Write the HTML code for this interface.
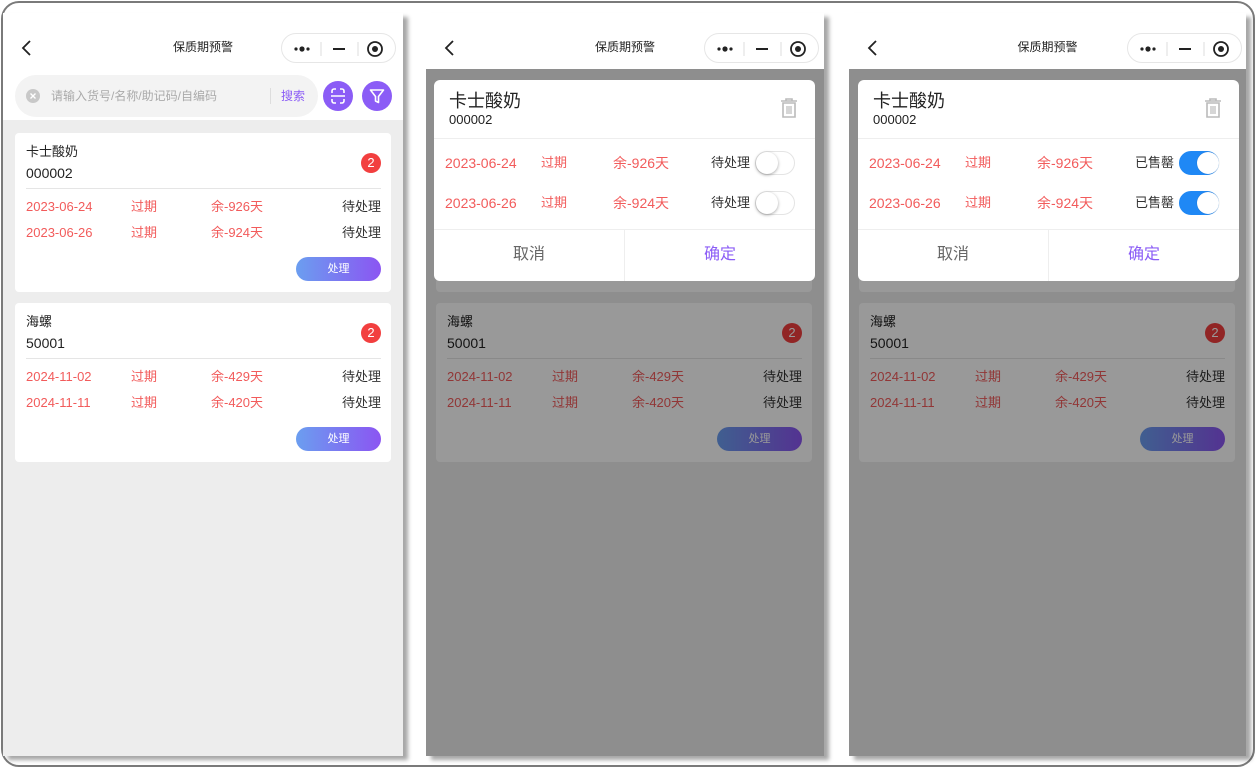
<!DOCTYPE html>
<html><head><meta charset="utf-8">
<style>
*{margin:0;padding:0;box-sizing:border-box}
body{width:1257px;height:769px;background:#fff;position:relative;overflow:hidden;font-family:"Liberation Sans","Noto Sans CJK SC",sans-serif;color:#333}
.frame{position:absolute;left:1px;top:1px;width:1254px;height:766px;border:2px solid #7a7a7a;border-radius:18px}
.panel{position:absolute;top:13px;height:743px;background:#ededed;box-shadow:5px 4px 4px rgba(0,0,0,.35);overflow:hidden}
.abs{position:absolute}
.hdr{position:absolute;left:0;top:0;width:100%;height:56px;background:#fff}
.title{position:absolute;left:0;top:25px;width:100%;text-align:center;font-size:12px;color:#222;line-height:18px}
.back{position:absolute;left:18px;top:27px}
.cap{position:absolute;left:278px;top:20px;width:115px;height:30px;border:1px solid #e6e6e6;border-radius:15px;background:#fff}
.card{position:absolute;left:12px;width:376px;height:159px;background:#fff;border-radius:4px}
.t{position:absolute;white-space:nowrap;line-height:16px;transform:translateY(-50%)}
.red{color:#f25b5b;font-size:13px}
.btn{position:absolute;left:281px;top:124px;width:85px;height:24px;border-radius:12px;background:linear-gradient(90deg,#6b9ef0,#8b55f2);color:#fff;font-size:11px;text-align:center;line-height:24px}
.badge{position:absolute;left:346px;top:20px;width:20px;height:20px;border-radius:50%;background:#f23f3f;color:#fff;font-size:13px;text-align:center;line-height:20px}
.ov{position:absolute;left:0;top:56px;width:100%;bottom:0;background:rgba(0,0,0,.4)}
.dlg{position:absolute;top:67px;width:381px;height:201px;background:#fff;border-radius:6px;overflow:hidden}
.tg{position:absolute;left:321px;width:40px;height:24px;border-radius:12px;border:1px solid #e4e4e4;background:#fff}
.tg i{position:absolute;left:0;top:0;width:22px;height:22px;border-radius:50%;background:#fff;box-shadow:0 1px 3px rgba(0,0,0,.35)}
.tg.on{background:#1f88f5;border-color:#1f88f5}
.tg.on i{left:17px;box-shadow:0 0 1px rgba(0,0,0,.3)}
</style></head><body>
<div class="frame"></div>

<!-- capsule template reused -->
<!-- PANEL 1 -->
<div class="panel" style="left:3px;width:400px">
  <div class="hdr" style="height:107px"></div>
  <svg class="back" width="12" height="16" viewBox="0 0 12 16"><path d="M9 1L2 8l7 7" fill="none" stroke="#222" stroke-width="1.8"/></svg>
  <div class="title">保质期预警</div>
  <div class="cap"><svg width="115" height="30" viewBox="0 0 115 30"><circle cx="14" cy="15" r="1.6" fill="#222"/><circle cx="20" cy="15" r="2.6" fill="#222"/><circle cx="26" cy="15" r="1.6" fill="#222"/><path d="M39 8v14M76 8v14" stroke="#ddd"/><path d="M51 15h12" stroke="#222" stroke-width="2"/><circle cx="93" cy="15" r="7" fill="none" stroke="#222" stroke-width="1.8"/><circle cx="93" cy="15" r="3" fill="#222"/></svg></div>
  <div class="abs" style="left:12px;top:62px;width:303px;height:42px;border-radius:21px;background:#f3f3f3"></div>
  <svg class="abs" style="left:23px;top:76px" width="14" height="14"><circle cx="7" cy="7" r="7" fill="#c8c8c8"/><path d="M4.5 4.5l5 5M9.5 4.5l-5 5" stroke="#fff" stroke-width="1.4"/></svg>
  <div class="t" style="left:48px;top:83px;font-size:12px;color:#aaa">请输入货号/名称/助记码/自编码</div>
  <div class="abs" style="left:267px;top:75px;width:1px;height:16px;background:#ddd"></div>
  <div class="t" style="left:278px;top:83px;font-size:12px;color:#8b5cf6">搜索</div>
  <svg class="abs" style="left:320px;top:68px" width="30" height="30"><circle cx="15" cy="15" r="15" fill="#8b5cf6"/><path d="M9 12v-2a2 2 0 0 1 2-2h2M17 8h2a2 2 0 0 1 2 2v2M21 18v2a2 2 0 0 1-2 2h-2M13 22h-2a2 2 0 0 1-2-2v-2M8 15h14" fill="none" stroke="#fff" stroke-width="1.6"/></svg>
  <svg class="abs" style="left:359px;top:68px" width="30" height="30"><circle cx="15" cy="15" r="15" fill="#8b5cf6"/><path d="M8.5 9h13l-5 6.5v6l-3-1.5v-4.5z" fill="none" stroke="#fff" stroke-width="1.6" stroke-linejoin="round"/></svg>

  <div class="card" style="top:120px">
    <div class="t" style="left:11px;top:19px;font-size:13px;color:#222">卡士酸奶</div>
    <div class="t" style="left:11px;top:40px;font-size:14px;color:#222">000002</div>
    <div class="badge">2</div>
    <div class="abs" style="left:11px;top:55px;width:355px;height:1px;background:#e5e5e5"></div>
    <div class="t red" style="left:11px;top:74px">2023-06-24</div><div class="t red" style="left:116px;top:74px">过期</div><div class="t red" style="left:196px;top:74px">余-926天</div><div class="t" style="right:10px;top:74px;font-size:13px">待处理</div>
    <div class="t red" style="left:11px;top:100px">2023-06-26</div><div class="t red" style="left:116px;top:100px">过期</div><div class="t red" style="left:196px;top:100px">余-924天</div><div class="t" style="right:10px;top:100px;font-size:13px">待处理</div>
    <div class="btn">处理</div>
  </div>
  <div class="card" style="top:290px">
    <div class="t" style="left:11px;top:19px;font-size:13px;color:#222">海螺</div>
    <div class="t" style="left:11px;top:40px;font-size:14px;color:#222">50001</div>
    <div class="badge">2</div>
    <div class="abs" style="left:11px;top:55px;width:355px;height:1px;background:#e5e5e5"></div>
    <div class="t red" style="left:11px;top:74px">2024-11-02</div><div class="t red" style="left:116px;top:74px">过期</div><div class="t red" style="left:196px;top:74px">余-429天</div><div class="t" style="right:10px;top:74px;font-size:13px">待处理</div>
    <div class="t red" style="left:11px;top:100px">2024-11-11</div><div class="t red" style="left:116px;top:100px">过期</div><div class="t red" style="left:196px;top:100px">余-420天</div><div class="t" style="right:10px;top:100px;font-size:13px">待处理</div>
    <div class="btn">处理</div>
  </div>
</div>

<!-- PANEL 2 & 3 -->
<div class="panel" style="left:426px;width:398px" id="p2">
  <div class="hdr"></div>
  <svg class="back" width="12" height="16" viewBox="0 0 12 16"><path d="M9 1L2 8l7 7" fill="none" stroke="#222" stroke-width="1.8"/></svg>
  <div class="title">保质期预警</div>
  <div class="cap"><svg width="115" height="30" viewBox="0 0 115 30"><circle cx="14" cy="15" r="1.6" fill="#222"/><circle cx="20" cy="15" r="2.6" fill="#222"/><circle cx="26" cy="15" r="1.6" fill="#222"/><path d="M39 8v14M76 8v14" stroke="#ddd"/><path d="M51 15h12" stroke="#222" stroke-width="2"/><circle cx="93" cy="15" r="7" fill="none" stroke="#222" stroke-width="1.8"/><circle cx="93" cy="15" r="3" fill="#222"/></svg></div>
  <div class="card" style="top:110px;left:10px;height:169px"></div>
  <div class="card" style="top:290px;left:10px">
    <div class="t" style="left:11px;top:19px;font-size:13px;color:#222">海螺</div>
    <div class="t" style="left:11px;top:40px;font-size:14px;color:#222">50001</div>
    <div class="badge">2</div>
    <div class="abs" style="left:11px;top:55px;width:355px;height:1px;background:#e5e5e5"></div>
    <div class="t red" style="left:11px;top:74px">2024-11-02</div><div class="t red" style="left:116px;top:74px">过期</div><div class="t red" style="left:196px;top:74px">余-429天</div><div class="t" style="right:10px;top:74px;font-size:13px">待处理</div>
    <div class="t red" style="left:11px;top:100px">2024-11-11</div><div class="t red" style="left:116px;top:100px">过期</div><div class="t red" style="left:196px;top:100px">余-420天</div><div class="t" style="right:10px;top:100px;font-size:13px">待处理</div>
    <div class="btn">处理</div>
  </div>
  <div class="ov"></div>
  <div class="dlg" style="left:8px">
    <div class="t" style="left:15px;top:21px;font-size:18px;color:#222;line-height:22px">卡士酸奶</div>
    <div class="t" style="left:15px;top:40px;font-size:13px;color:#222">000002</div>
    <svg class="abs" style="left:345px;top:17px" width="20" height="22"><path d="M2 4h16M7 4V2h6v2M4 6h12v14H4z" fill="none" stroke="#bbb" stroke-width="1.6"/><path d="M8 9v8M10 9v8M12 9v8" stroke="#bbb" stroke-width="1.2"/></svg>
    <div class="abs" style="left:0;top:58px;width:100%;height:1px;background:#eee"></div>
    <div class="t red" style="left:11px;top:83px;font-size:14px">2023-06-24</div><div class="t red" style="left:107px;top:83px">过期</div><div class="t red" style="left:179px;top:83px;font-size:14px">余-926天</div><div class="t" style="right:65px;top:83px;font-size:13px">待处理</div>
    <div class="tg" style="top:71px"><i></i></div>
    <div class="t red" style="left:11px;top:123px;font-size:14px">2023-06-26</div><div class="t red" style="left:107px;top:123px">过期</div><div class="t red" style="left:179px;top:123px;font-size:14px">余-924天</div><div class="t" style="right:65px;top:123px;font-size:13px">待处理</div>
    <div class="tg" style="top:111px"><i></i></div>
    <div class="abs" style="left:0;top:149px;width:100%;height:1px;background:#eee"></div>
    <div class="abs" style="left:190px;top:149px;width:1px;height:52px;background:#eee"></div>
    <div class="t" style="left:0;width:190px;text-align:center;top:175px;font-size:16px;color:#666;line-height:20px">取消</div>
    <div class="t" style="left:191px;width:190px;text-align:center;top:175px;font-size:16px;color:#8b5cf6;line-height:20px">确定</div>
  </div>
</div>

<div class="panel" style="left:849px;width:397px">
  <div class="hdr"></div>
  <svg class="back" width="12" height="16" viewBox="0 0 12 16"><path d="M9 1L2 8l7 7" fill="none" stroke="#222" stroke-width="1.8"/></svg>
  <div class="title">保质期预警</div>
  <div class="cap"><svg width="115" height="30" viewBox="0 0 115 30"><circle cx="14" cy="15" r="1.6" fill="#222"/><circle cx="20" cy="15" r="2.6" fill="#222"/><circle cx="26" cy="15" r="1.6" fill="#222"/><path d="M39 8v14M76 8v14" stroke="#ddd"/><path d="M51 15h12" stroke="#222" stroke-width="2"/><circle cx="93" cy="15" r="7" fill="none" stroke="#222" stroke-width="1.8"/><circle cx="93" cy="15" r="3" fill="#222"/></svg></div>
  <div class="card" style="top:110px;left:10px;height:169px"></div>
  <div class="card" style="top:290px;left:10px">
    <div class="t" style="left:11px;top:19px;font-size:13px;color:#222">海螺</div>
    <div class="t" style="left:11px;top:40px;font-size:14px;color:#222">50001</div>
    <div class="badge">2</div>
    <div class="abs" style="left:11px;top:55px;width:355px;height:1px;background:#e5e5e5"></div>
    <div class="t red" style="left:11px;top:74px">2024-11-02</div><div class="t red" style="left:116px;top:74px">过期</div><div class="t red" style="left:196px;top:74px">余-429天</div><div class="t" style="right:10px;top:74px;font-size:13px">待处理</div>
    <div class="t red" style="left:11px;top:100px">2024-11-11</div><div class="t red" style="left:116px;top:100px">过期</div><div class="t red" style="left:196px;top:100px">余-420天</div><div class="t" style="right:10px;top:100px;font-size:13px">待处理</div>
    <div class="btn">处理</div>
  </div>
  <div class="ov"></div>
  <div class="dlg" style="left:9px">
    <div class="t" style="left:15px;top:21px;font-size:18px;color:#222;line-height:22px">卡士酸奶</div>
    <div class="t" style="left:15px;top:40px;font-size:13px;color:#222">000002</div>
    <svg class="abs" style="left:345px;top:17px" width="20" height="22"><path d="M2 4h16M7 4V2h6v2M4 6h12v14H4z" fill="none" stroke="#bbb" stroke-width="1.6"/><path d="M8 9v8M10 9v8M12 9v8" stroke="#bbb" stroke-width="1.2"/></svg>
    <div class="abs" style="left:0;top:58px;width:100%;height:1px;background:#eee"></div>
    <div class="t red" style="left:11px;top:83px;font-size:14px">2023-06-24</div><div class="t red" style="left:107px;top:83px">过期</div><div class="t red" style="left:179px;top:83px;font-size:14px">余-926天</div><div class="t" style="right:65px;top:83px;font-size:13px">已售罄</div>
    <div class="tg on" style="top:71px"><i></i></div>
    <div class="t red" style="left:11px;top:123px;font-size:14px">2023-06-26</div><div class="t red" style="left:107px;top:123px">过期</div><div class="t red" style="left:179px;top:123px;font-size:14px">余-924天</div><div class="t" style="right:65px;top:123px;font-size:13px">已售罄</div>
    <div class="tg on" style="top:111px"><i></i></div>
    <div class="abs" style="left:0;top:149px;width:100%;height:1px;background:#eee"></div>
    <div class="abs" style="left:190px;top:149px;width:1px;height:52px;background:#eee"></div>
    <div class="t" style="left:0;width:190px;text-align:center;top:175px;font-size:16px;color:#666;line-height:20px">取消</div>
    <div class="t" style="left:191px;width:190px;text-align:center;top:175px;font-size:16px;color:#8b5cf6;line-height:20px">确定</div>
  </div>
</div>
</body></html>
